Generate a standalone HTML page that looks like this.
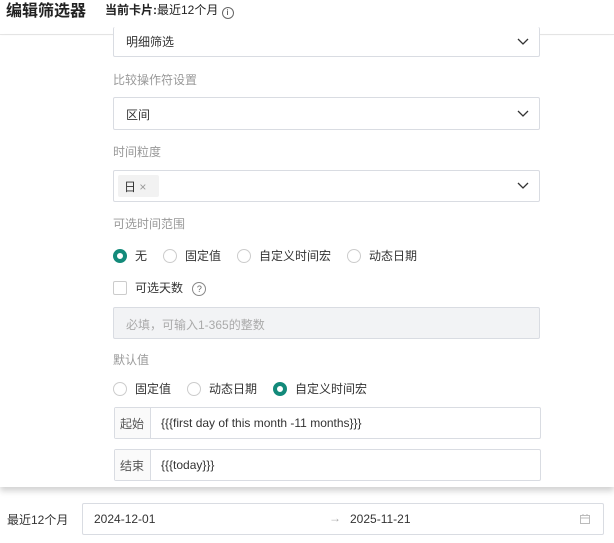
<!DOCTYPE html>
<html><head><meta charset="utf-8"><style>
*{box-sizing:border-box;margin:0;padding:0}
body{width:614px;height:543px;background:#fff;font-family:"Liberation Sans","Noto Sans CJK SC",sans-serif;font-size:12px;color:#333;position:relative;overflow:hidden}
.a{position:absolute}
.box{position:absolute;left:113px;width:427px;border:1px solid #d9dce2;border-radius:2px;background:#fff}
.lbl{position:absolute;left:113px;color:#999;font-size:12px}
.chev{position:absolute;right:10px;top:50%;margin-top:-5px}
.radio{display:inline-block;width:14px;height:14px;border:1px solid #ccc;border-radius:50%;vertical-align:-3px;margin-right:8px;background:#fff}
.radio.on{border:4px solid #138a7a}
.rg span.t{margin-right:16px;color:#333}
</style></head><body>
<div class="a" style="left:0;top:0;width:614px;height:35px;border-bottom:1px solid #e6e6e6"></div>
<div class="a" style="left:6px;top:-3px;font-size:16px;font-weight:bold;color:#222">编辑筛选器</div>
<div class="a" style="left:105px;top:1px;font-size:12px;color:#222"><b>当前卡片:</b>最近12个月 <span style="display:inline-block;width:12px;height:12px;border:1px solid #666;border-radius:50%;font-size:8px;text-align:center;line-height:10px;vertical-align:-1px">i</span></div>
<div class="a" style="left:0;top:36px;width:614px;height:451px;background:#fff;box-shadow:0 4px 6px rgba(0,0,0,0.18)"></div>

<div class="box" style="top:27px;height:30px;border-top:none"><span class="a" style="left:12px;top:6px">明细筛选</span><svg class="chev" width="12" height="10"><path d="M1 2l5 5 5-5" stroke="#333" fill="none" stroke-width="1.3"/></svg></div>
<div class="lbl" style="top:71px">比较操作符设置</div>
<div class="box" style="top:97px;height:33px"><span class="a" style="left:12px;top:8px">区间</span><svg class="chev" width="12" height="10"><path d="M1 2l5 5 5-5" stroke="#333" fill="none" stroke-width="1.3"/></svg></div>
<div class="lbl" style="top:143px">时间粒度</div>
<div class="box" style="top:170px;height:32px"><span class="a" style="left:4px;top:4px;width:41px;height:22px;background:#f2f2f2;border-radius:2px;padding:3px 0 0 6px">日 <span style="color:#999">×</span></span><svg class="chev" width="12" height="10"><path d="M1 2l5 5 5-5" stroke="#333" fill="none" stroke-width="1.3"/></svg></div>
<div class="lbl" style="top:215px">可选时间范围</div>
<div class="a rg" style="left:113px;top:247px"><span class="radio on"></span><span class="t">无</span><span class="radio"></span><span class="t">固定值</span><span class="radio"></span><span class="t">自定义时间宏</span><span class="radio"></span><span class="t">动态日期</span></div>
<div class="a" style="left:113px;top:279px"><span style="display:inline-block;width:14px;height:14px;border:1px solid #ccc;border-radius:2px;vertical-align:-3px;margin-right:8px"></span>可选天数 <span style="display:inline-block;width:14px;height:14px;border:1px solid #888;border-radius:50%;font-size:9px;text-align:center;line-height:12px;margin-left:6px;color:#666">?</span></div>
<div class="box" style="top:307px;height:32px;background:#f2f3f5"><span class="a" style="left:12px;top:8px;color:#aaa">必填，可输入1-365的整数</span></div>
<div class="lbl" style="top:351px">默认值</div>
<div class="a rg" style="left:113px;top:380px"><span class="radio"></span><span class="t">固定值</span><span class="radio"></span><span class="t">动态日期</span><span class="radio on"></span><span class="t">自定义时间宏</span></div>
<div class="box" style="top:407px;height:32px;left:114px;width:427px"><span class="a" style="left:0;top:0;width:36px;height:30px;border-right:1px solid #d9dce2;background:#fafafa;padding:7px 0 0 5px;color:#555">起始</span><span class="a" style="left:46px;top:8px">{{{first day of this month -11 months}}}</span></div>
<div class="box" style="top:449px;height:32px;left:114px;width:427px"><span class="a" style="left:0;top:0;width:36px;height:30px;border-right:1px solid #d9dce2;background:#fafafa;padding:7px 0 0 5px;color:#555">结束</span><span class="a" style="left:46px;top:8px">{{{today}}}</span></div>

<div class="a" style="left:7px;top:511px">最近12个月</div>
<div class="a" style="left:82px;top:503px;width:522px;height:32px;border:1px solid #d9dce2;border-radius:2px">
<span class="a" style="left:11px;top:8px">2024-12-01</span>
<span class="a" style="left:246px;top:7px;color:#aaa">→</span>
<span class="a" style="left:267px;top:8px">2025-11-21</span>
<svg class="a" style="left:496px;top:9px" width="12" height="12"><rect x="1.5" y="2.5" width="9" height="8" fill="none" stroke="#bbb"/><path d="M1.5 5h9M4 1v2M8 1v2" stroke="#bbb"/></svg>
</div>
</body></html>
